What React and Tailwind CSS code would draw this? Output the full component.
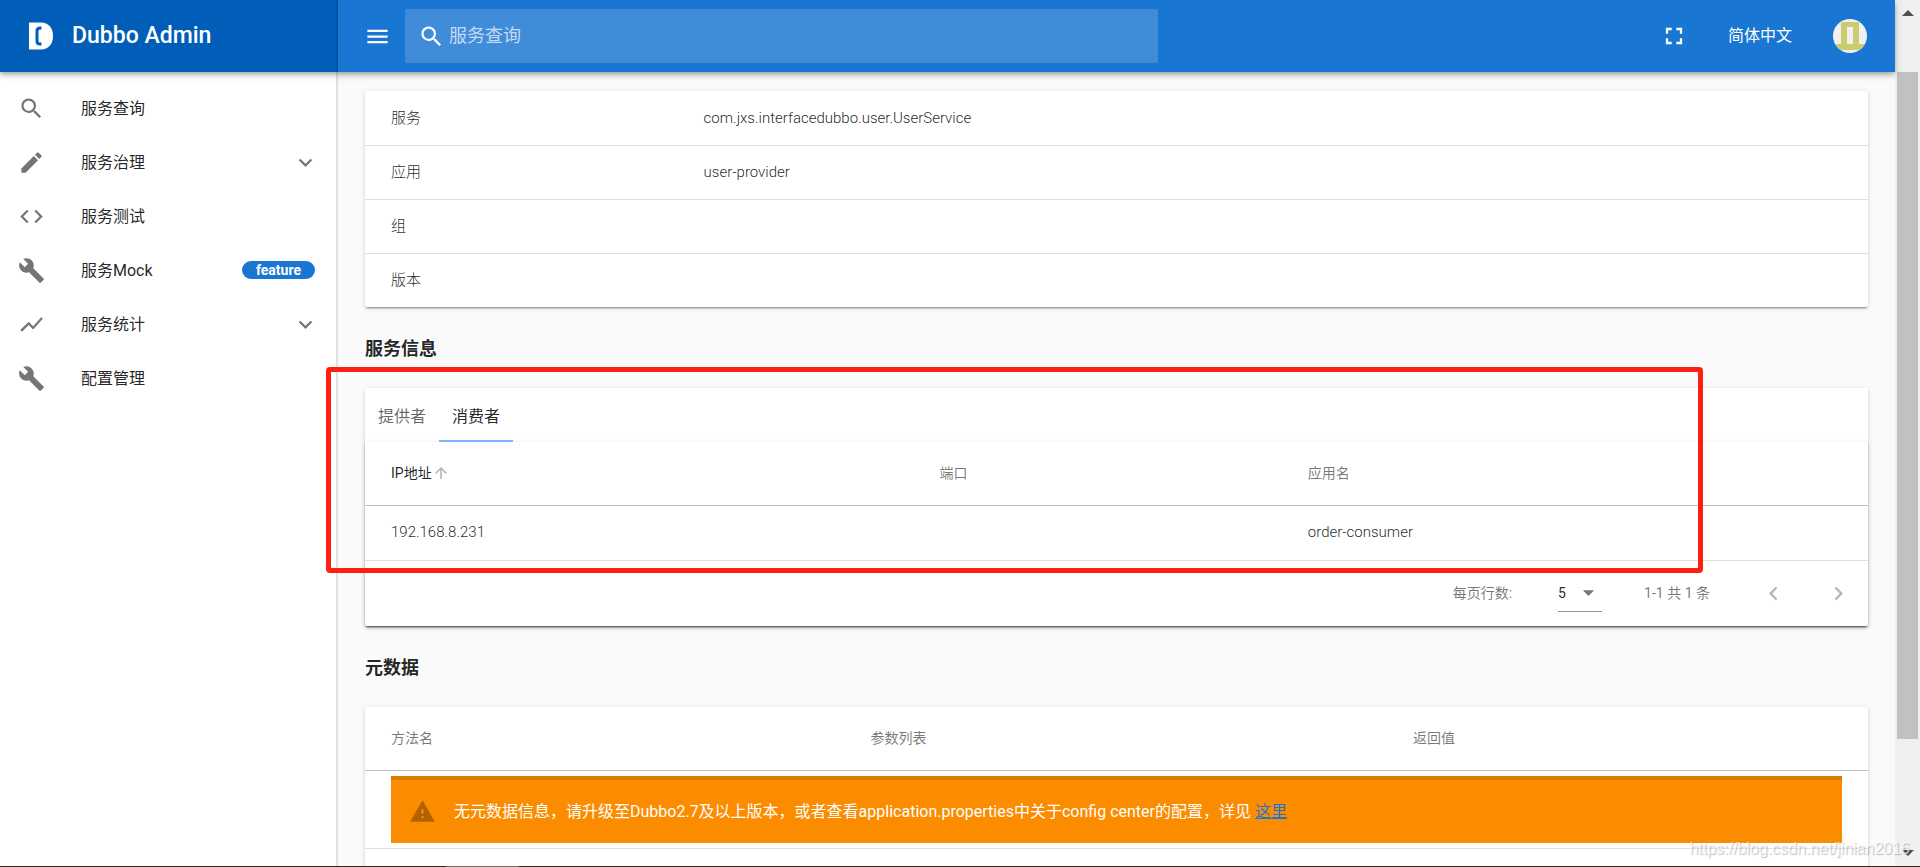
import { useState } from 'react';
import {
  MdArrowDropDown,
  MdArrowUpward,
  MdBuild,
  MdChevronLeft,
  MdChevronRight,
  MdCode,
  MdEdit,
  MdFullscreen,
  MdKeyboardArrowDown,
  MdMenu,
  MdSearch,
  MdShowChart,
  MdWarning,
} from 'react-icons/md';

const menuItems = [
  { title: '服务查询', icon: MdSearch },
  { title: '服务治理', icon: MdEdit, group: true },
  { title: '服务测试', icon: MdCode },
  { title: '服务Mock', icon: MdBuild, badge: 'feature' },
  { title: '服务统计', icon: MdShowChart, group: true },
  { title: '配置管理', icon: MdBuild },
];

const basicInfo = [
  { label: '服务', value: 'com.jxs.interfacedubbo.user.UserService' },
  { label: '应用', value: 'user-provider' },
  { label: '组', value: '' },
  { label: '版本', value: '' },
];

const consumers = [{ ip: '192.168.8.231', port: '', application: 'order-consumer' }];

const cardClass =
  'rounded-xs bg-white shadow-[0_3px_1px_-2px_rgba(0,0,0,0.2),0_2px_2px_0_rgba(0,0,0,0.14),0_1px_5px_0_rgba(0,0,0,0.12)]';

function Logo() {
  return (
    <svg className="h-7 w-6" viewBox="0 0 24 28" fill="none">
      <path d="M0 0.5h12c7.500 0 12 5.500 12 13.500s-4.500 13.500-12 13.500H0z" fill="#fff" />
      <path d="M12.500 6h-1.500Q8 6 8 9v10q0 3 3 3h1.500" stroke="#005eb8" strokeWidth="3" />
    </svg>
  );
}

function Avatar() {
  return (
    <svg className="size-[34px]" viewBox="0 0 34 34">
      <defs>
        <clipPath id="avatar-clip">
          <circle cx="17" cy="17" r="17" />
        </clipPath>
      </defs>
      <g clipPath="url(#avatar-clip)">
        <rect width="34" height="34" fill="#f0f0f0" />
        <path d="M8 3h18v22h8v6H0v-6h8z" fill="#cbcb6f" />
        <rect x="14" y="8" width="6" height="17" fill="#f0f0f0" />
      </g>
    </svg>
  );
}

function Toolbar() {
  return (
    <header className="relative z-10 flex h-[72px] shrink-0 bg-[#1976d2] text-white shadow-[0_2px_4px_-1px_rgba(0,0,0,0.2),0_4px_5px_0_rgba(0,0,0,0.14),0_1px_10px_0_rgba(0,0,0,0.12)]">
      <div className="flex w-[338px] shrink-0 items-center gap-[19px] border-r-2 border-[#0053a3] bg-[#005eb8] pl-[29px]">
        <Logo />
        <span className="text-[23px] font-medium">Dubbo Admin</span>
      </div>
      <div className="flex flex-1 items-center pr-7 pl-[26px]">
        <button type="button" aria-label="menu">
          <MdMenu className="size-[27px]" />
        </button>
        <label className="ml-[14px] flex h-[54px] w-[50.1%] items-center gap-1 rounded-xs bg-[#408cd9] pl-[13px]">
          <MdSearch className="size-[27px] shrink-0" />
          <input
            type="text"
            aria-label="服务查询"
            placeholder="服务查询"
            className="min-w-0 flex-1 bg-transparent text-lg outline-none placeholder:text-white/70"
          />
        </label>
        <div className="ml-auto flex items-center">
          <button type="button" aria-label="fullscreen" className="mr-10">
            <MdFullscreen className="size-[28px]" />
          </button>
          <button type="button" className="mr-[41px] text-base">
            简体中文
          </button>
          <button type="button" aria-label="account">
            <Avatar />
          </button>
        </div>
      </div>
    </header>
  );
}

function Sidebar() {
  return (
    <nav className="w-[338px] shrink-0 border-r-2 border-[#e0e0e0] bg-white pt-[9px]">
      <ul>
        {menuItems.map(({ title, icon: Icon, group, badge }) => (
          <li key={title}>
            <a href="#" className="flex h-[54px] items-center pr-[17px] pl-[18px] text-base">
              <Icon className="mr-9 size-[27px] text-[#757575]" />
              <span className="pt-0.5">{title}</span>
              {badge && (
                <span className="ml-auto mr-1 h-[18px] rounded-full bg-[#1976d2] px-[14px] text-sm leading-[18px] font-bold text-white">
                  {badge}
                </span>
              )}
              {group && <MdKeyboardArrowDown className="ml-auto size-[27px] text-[#757575]" />}
            </a>
          </li>
        ))}
      </ul>
    </nav>
  );
}

function BasicInfo() {
  return (
    <div className={cardClass}>
      <table className="w-full table-fixed text-left text-[15px] font-light">
        <colgroup>
          <col className="w-[20.8%]" />
          <col />
        </colgroup>
        <tbody>
          {basicInfo.map((row) => (
            <tr key={row.label} className="h-[54px] border-b border-[#e0e0e0] last:border-b-0">
              <td className="px-[26px]">{row.label}</td>
              <td className="px-[26px]">{row.value}</td>
            </tr>
          ))}
        </tbody>
      </table>
    </div>
  );
}

function ServiceInfo() {
  const [tab, setTab] = useState('consumer');
  const tabClass = 'h-[54px] border-b-2 px-[13px] pt-[6px] text-base';

  return (
    <div className={cardClass}>
      <div className="flex" role="tablist">
        <button
          type="button"
          role="tab"
          aria-selected={tab === 'provider'}
          onClick={() => setTab('provider')}
          className={`${tabClass} ${tab === 'provider' ? 'border-[#82b1ff]' : 'border-transparent text-black/60'}`}
        >
          提供者
        </button>
        <button
          type="button"
          role="tab"
          aria-selected={tab === 'consumer'}
          onClick={() => setTab('consumer')}
          className={`${tabClass} ${tab === 'consumer' ? 'border-[#82b1ff]' : 'border-transparent text-black/60'}`}
        >
          消费者
        </button>
      </div>
      <div className={cardClass}>
        <table className="w-full table-fixed text-left text-[15px] font-light">
          <colgroup>
            <col className="w-[36.5%]" />
            <col className="w-[24.5%]" />
            <col />
          </colgroup>
          <thead>
            <tr className="h-[63px] border-b border-[#c0c0c0] text-sm text-black/54">
              <th className="px-[26px] font-normal text-black/87">
                <span className="flex items-center">
                  IP地址
                  <MdArrowUpward className="size-[18px] text-black/30" />
                </span>
              </th>
              <th className="px-[26px] font-normal">端口</th>
              <th className="px-[26px] font-normal">应用名</th>
            </tr>
          </thead>
          <tbody>
            {consumers.map((row) => (
              <tr key={row.ip} className="h-[55px] border-b border-[#e0e0e0]">
                <td className="px-[26px]">{row.ip}</td>
                <td className="px-[26px]">{row.port}</td>
                <td className="px-[26px]">{row.application}</td>
              </tr>
            ))}
          </tbody>
        </table>
        <div className="flex h-[65px] items-center justify-end pr-4 text-sm text-black/54">
          <label htmlFor="page-size">每页行数:</label>
          <div className="relative ml-[46px] flex items-center border-b border-black/42">
            <select
              id="page-size"
              defaultValue="5"
              className="h-9 w-11 appearance-none bg-transparent text-black/87"
            >
              <option>5</option>
              <option>10</option>
              <option>25</option>
            </select>
            <MdArrowDropDown className="pointer-events-none absolute right-0 size-[27px]" />
          </div>
          <span className="ml-[42px]">1-1 共 1 条</span>
          <button type="button" aria-label="上一页" className="ml-[50px]" disabled>
            <MdChevronLeft className="size-[27px] text-black/30" />
          </button>
          <button type="button" aria-label="下一页" className="ml-[38px]" disabled>
            <MdChevronRight className="size-[27px] text-black/30" />
          </button>
        </div>
      </div>
    </div>
  );
}

function Metadata() {
  return (
    <div className={cardClass}>
      <table className="w-full table-fixed text-left">
        <colgroup>
          <col className="w-[31.9%]" />
          <col className="w-[36.1%]" />
          <col />
        </colgroup>
        <thead>
          <tr className="h-16 border-b border-[#c0c0c0] text-sm text-black/54">
            <th className="px-[26px] font-normal">方法名</th>
            <th className="px-[26px] font-normal">参数列表</th>
            <th className="px-[26px] font-normal">返回值</th>
          </tr>
        </thead>
        <tbody>
          <tr className="border-b border-[#e0e0e0]">
            <td colSpan={3} className="px-[26px] py-[5px]">
              <div className="flex h-[67px] items-center border-t-4 border-[#dc7a00] bg-[#fb8c00] pl-[18px] text-base text-white">
                <MdWarning className="mr-[18px] size-[27px] text-[#b06200]" />
                <p>
                  无元数据信息，请升级至Dubbo2.7及以上版本，或者查看application.properties中关于config
                  center的配置，详见{' '}
                  <a href="#" className="text-[#1976d2] underline">
                    这里
                  </a>
                </p>
              </div>
            </td>
          </tr>
        </tbody>
      </table>
      <div className="h-16" />
    </div>
  );
}

function Scrollbar() {
  return (
    <div className="flex w-[25px] shrink-0 flex-col items-center bg-[#f0f0f0]" aria-hidden="true">
      <svg className="mt-[10px] h-[6px] w-3" viewBox="0 0 12 6">
        <path d="M6 0l6 6H0z" fill="#505050" />
      </svg>
      <div className="mt-14 h-[77%] w-[21px] bg-[#c1c1c1]" />
      <svg className="mt-auto mb-[10px] h-[6px] w-3" viewBox="0 0 12 6">
        <path d="M6 6l6-6H0z" fill="#505050" />
      </svg>
    </div>
  );
}

export default function App() {
  return (
    <div className="relative flex h-screen flex-col overflow-hidden font-[Roboto,'Noto_Sans_CJK_SC',sans-serif] text-black/87">
      <div className="flex min-h-0 flex-1">
        <div className="flex min-w-0 flex-1 flex-col">
          <Toolbar />
          <div className="flex min-h-0 flex-1">
            <Sidebar />
            <main className="relative min-w-0 flex-1 bg-[#fafafa]">
              <div className="h-full overflow-hidden px-[27px] pt-[19px]">
                <BasicInfo />
                <h3 className="mt-7 mb-[26px] text-lg leading-[27px] font-bold">服务信息</h3>
                <ServiceInfo />
                <h3 className="mt-7 mb-[26px] text-lg leading-[27px] font-bold">元数据</h3>
                <Metadata />
              </div>
              {/* highlight frame round the consumer list */}
              <div className="pointer-events-none absolute top-[295px] right-48 -left-3 h-[206px] rounded-sm border-5 border-[#ff1f10]" />
            </main>
          </div>
        </div>
        <Scrollbar />
      </div>
      <div className="h-px shrink-0 bg-[#3b2222]">
        <div className="ml-[446px] h-px w-[73px] bg-[#7a6a6a]" />
      </div>
      <span className="absolute right-[10px] bottom-2 font-['Liberation_Sans',sans-serif] text-base leading-5 text-white/70 [text-shadow:1px_1px_1px_rgba(0,0,0,0.25)]">
        https://blog.csdn.net/jinian2016
      </span>
    </div>
  );
}
